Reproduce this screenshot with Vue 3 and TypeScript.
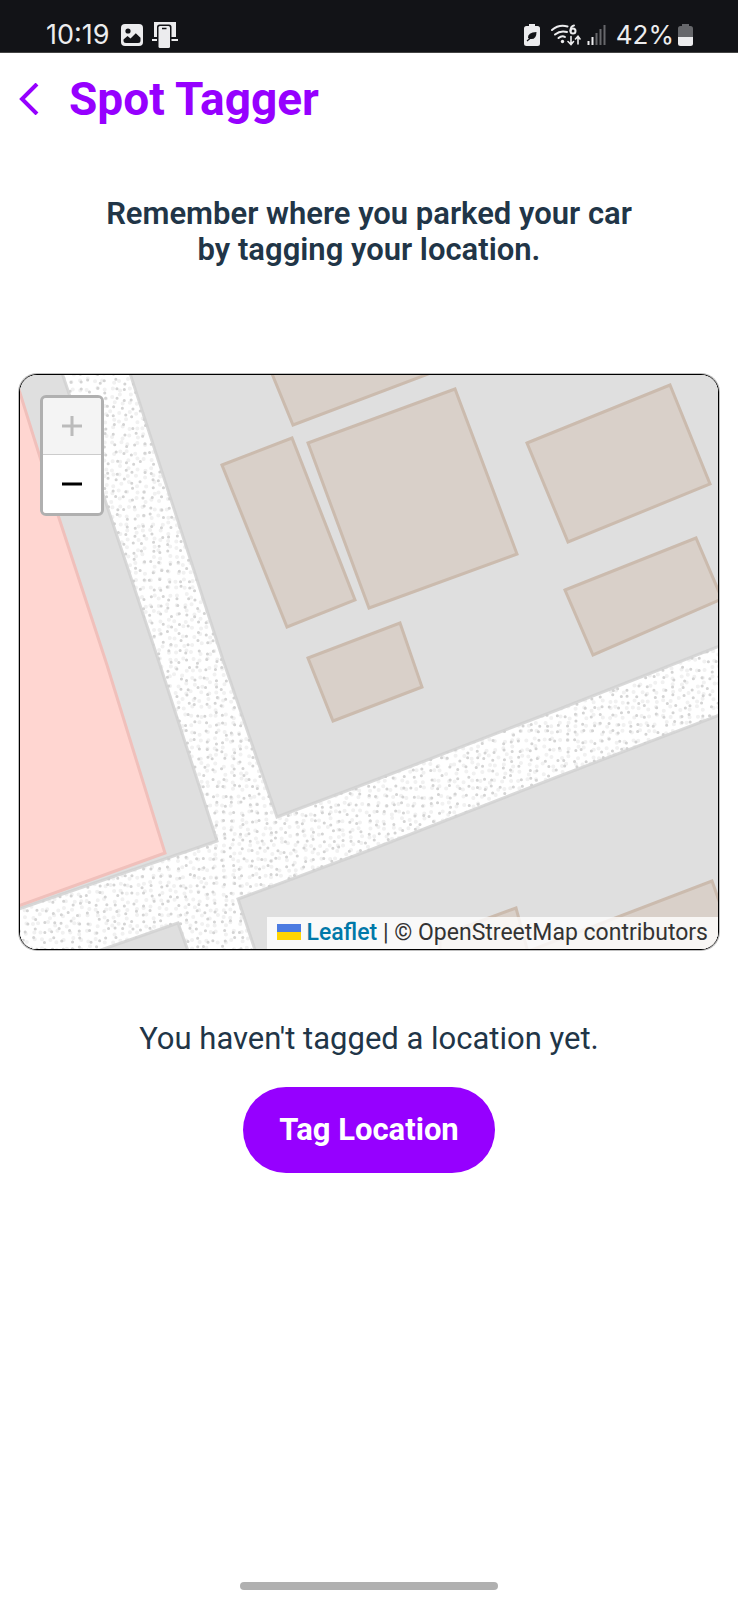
<script setup lang="ts">
import { ref } from 'vue'

interface Point {
  x: number
  y: number
}

const buildings: string[] = [
  '268,364 293,425 436,371 430,364',
  '222,465 292,438 355,600 287,627',
  '308,443 455,389 517,554 369,608',
  '308,658 400,623 422,687 333,721',
  '527,443 670,385 710,484 568,542',
  '565,590 696,538 722,599 593,655',
  '440,936 516,908 530,960 440,960',
  '500,962 712,881 740,960',
]

const road =
  'M59 364 L105 500 L160 665 L217 841 L10 912 V982 L95 952 L178 923 L192 962 H259 L238 899 L370 850 L557 777 L730 711 V642 L557 710 L370 782 L277 817 L223 660 L127 364 Z'

// Deterministic jittered grid of gravel specks for the pedestrian surface.
function gravel(step: number, seed: number): string {
  let state = seed
  const next = (): number => {
    state = (state * 1664525 + 1013904223) % 4294967296
    return state / 4294967296
  }
  const specks: Point[] = []
  for (let y = 370; y < 956; y += step) {
    for (let x = 14; x < 726; x += step) {
      specks.push({ x: x + next() * step * 0.6, y: y + next() * step * 0.6 })
    }
  }
  return specks.map((p) => `M${p.x.toFixed(1)} ${p.y.toFixed(1)}h.1`).join('')
}

const darkSpecks = gravel(9, 7)
const lightSpecks = gravel(8, 91)

const tagged = ref(false)
</script>

<template>
  <div class="screen">
    <div class="status">
      <div class="status-group">
        <span class="clock">10:19</span>
        <svg class="icon-photo" viewBox="0 0 22 22" aria-hidden="true">
          <rect x="0" y="0" width="22" height="22" rx="4" fill="#ececee" />
          <circle cx="7" cy="7" r="2.6" fill="#121317" />
          <path d="M2.5 15.5 6.5 12 9.5 14.5 14.8 9.3 19.5 13.8V16.5Q19.5 19 17 19H5Q2.5 19 2.5 16.5Z" fill="#121317" />
        </svg>
        <svg class="icon-link" viewBox="0 0 28 26" aria-hidden="true">
          <path d="M3 0H25V15H3Z" fill="#ececee" />
          <path d="M1 17H27V19H1Z" fill="#ececee" />
          <path d="M6 26V5Q6 2.500 8.500 2.500H18Q20.500 2.500 20.500 5V26Z" fill="#121317" />
          <rect x="7.500" y="4" width="11.500" height="22" rx="1.500" fill="#ececee" />
          <path d="M11 6.500H15.500" stroke="#121317" stroke-width="1.500" />
        </svg>
      </div>
      <div class="status-group">
        <svg class="icon-saver" viewBox="0 0 16 22" aria-hidden="true">
          <path d="M5 0H11V2H13.500Q16 2 16 4.500V19.500Q16 22 13.500 22H2.500Q0 22 0 19.500V4.500Q0 2 2.500 2H5Z" fill="#ececee" />
          <path d="M4 14Q3.500 8.500 12.500 8Q12.500 16 6 15Z" fill="#121317" />
          <path d="M3 17 9.500 11.500" fill="none" stroke="#121317" stroke-width="1.200" />
        </svg>
        <svg class="icon-wifi" viewBox="0 0 30 22" aria-hidden="true">
          <g fill="none" stroke="#ececee" stroke-width="2" stroke-linecap="round">
            <path d="M1 6Q8 0 16.500 2.500" />
            <path d="M4 10.500Q9.500 6 16 8" />
            <path d="M7.500 14Q11 11 14 13" />
            <path d="M23 1.500Q19.500 2 19.500 7" />
            <circle cx="22" cy="7" r="2.500" />
            <path d="M20 12.500V20M17 17.500 20 20.500 22.500 17.500M27 20V12.500M24.500 15 27 12.200 29 15" stroke-width="1.600" />
          </g>
          <circle cx="11.500" cy="17.500" r="1.700" fill="#ececee" />
        </svg>
        <svg class="icon-signal" viewBox="0 0 20 20" aria-hidden="true">
          <path d="M1.500 20V16M5.500 20V12" stroke="#ececee" stroke-width="2" />
          <path d="M9.500 20V8M13.500 20V4M17.500 20V0" stroke="#66676b" stroke-width="2" />
        </svg>
        <span class="percent">42%</span>
        <svg class="icon-battery" viewBox="0 0 15 22" aria-hidden="true">
          <path d="M4 0H11V2H12.500Q15 2 15 4.500V13H0V4.500Q0 2 2.500 2H4Z" fill="#66676b" />
          <path d="M0 13H15V19.500Q15 22 12.500 22H2.500Q0 22 0 19.500Z" fill="#ececee" />
        </svg>
      </div>
    </div>

    <header class="header">
      <button class="back" type="button" aria-label="Back">
        <svg viewBox="0 0 20 32" aria-hidden="true">
          <path d="M18 1 3 16 18 31" fill="none" stroke="#9600ff" stroke-width="4" />
        </svg>
      </button>
      <h1>Spot Tagger</h1>
    </header>

    <main class="content">
      <p class="intro">Remember where you parked your car<br />by tagging your location.</p>

      <section class="map" aria-label="Map">
        <svg class="tiles" viewBox="20 375 698 574" preserveAspectRatio="xMidYMid slice" aria-hidden="true">
          <defs>
            <clipPath id="road-area"><path :d="road" /></clipPath>
          </defs>
          <rect x="0" y="355" width="740" height="620" fill="#dfdfdf" />
          <path :d="road" fill="#fff" />
          <g clip-path="url(#road-area)" fill="none" stroke-linecap="round">
            <path :d="lightSpecks" stroke="#f1f1f1" stroke-width="4" />
            <path :d="darkSpecks" stroke="#d4d4d4" stroke-width="3" />
          </g>
          <path :d="road" fill="none" stroke="#cfcfcf" stroke-opacity="0.8" stroke-width="3" />
          <path d="M10 362 20 393 58 515 107 665 165 853 10 909Z" fill="#ffd6d1" stroke="#f0c0bb" stroke-width="3" />
          <polygon
            v-for="shape in buildings"
            :key="shape"
            :points="shape"
            fill="#d9d0c9"
            stroke="#cbbbae"
            stroke-width="3"
          />
        </svg>

        <div class="zoom">
          <button type="button" aria-label="Zoom in" disabled>
            <svg viewBox="0 0 20 20" aria-hidden="true">
              <path d="M0 10H20M10 0V20" stroke="#bbb" stroke-width="3" />
            </svg>
          </button>
          <button type="button" aria-label="Zoom out">
            <svg viewBox="0 0 20 20" aria-hidden="true">
              <path d="M0 10H20" stroke="#000" stroke-width="3" />
            </svg>
          </button>
        </div>

        <div class="attribution">
          <a href="#leaflet">
            <svg viewBox="0 0 24 16" aria-hidden="true">
              <path d="M0 0H24V8H0Z" fill="#4c7be1" />
              <path d="M0 8H24V16H0Z" fill="#ffd500" />
            </svg>
            Leaflet</a>
          | © OpenStreetMap contributors
        </div>
      </section>

      <p class="message">{{ tagged ? 'Location tagged.' : "You haven't tagged a location yet." }}</p>
      <button class="tag" type="button" @click="tagged = true">Tag Location</button>
    </main>

    <div class="home-bar"></div>
  </div>
</template>

<style>
body {
  margin: 0;
  background: #fff;
}
</style>

<style scoped>
.screen {
  display: flex;
  flex-direction: column;
  min-height: 100vh;
  box-sizing: border-box;
  padding-bottom: 10px;
  background: #fff;
  color: #213547;
  font-family: Roboto, 'Liberation Sans', sans-serif;
}

svg {
  display: block;
}

.status {
  display: flex;
  justify-content: space-between;
  align-items: flex-end;
  height: 53px;
  box-sizing: border-box;
  padding: 0 45px 3px 46px;
  background: #121317;
  border-bottom: 1px solid #444;
  color: #ececee;
  font-family: Inter, Roboto, sans-serif;
  font-size: 27px;
  line-height: 28px;
}

.status-group {
  display: flex;
  align-items: center;
}

.clock {
  margin-right: 11px;
}

.icon-photo {
  width: 22px;
  height: 22px;
  margin-right: 8px;
}

.icon-link {
  width: 28px;
  height: 26px;
}

.icon-saver {
  width: 16px;
  height: 22px;
  margin-right: 11px;
}

.icon-wifi {
  width: 30px;
  height: 22px;
  margin-right: 6px;
}

.icon-signal {
  width: 20px;
  height: 20px;
  margin-right: 9px;
}

.percent {
  margin-right: 4px;
  font-size: 26px;
}

.icon-battery {
  width: 15px;
  height: 22px;
}

.header {
  display: flex;
  align-items: center;
  gap: 30px;
  padding: 18px 19px 0;
}

.back {
  padding: 0;
  border: 0;
  background: none;
}

.back svg {
  width: 20px;
  height: 32px;
}

h1 {
  margin: 0;
  color: #9600ff;
  font-size: 46px;
  font-weight: 700;
  line-height: 56px;
}

.content {
  display: flex;
  flex: 1;
  flex-direction: column;
  align-items: center;
  padding: 69px 19px 0;
}

.intro,
.message {
  margin: 0;
  font-size: 31px;
  line-height: 36px;
  text-align: center;
}

.intro {
  font-weight: 600;
}

.map {
  position: relative;
  width: 100%;
  box-sizing: border-box;
  margin: 106px 0 71px;
  overflow: hidden;
  border: 1px solid #000;
  border-radius: 18px;
  box-shadow: 0 0 0 1px rgba(0, 0, 0, 0.25);
}

.tiles {
  width: 100%;
}

.zoom {
  position: absolute;
  top: 20px;
  left: 20px;
  display: flex;
  flex-direction: column;
  overflow: hidden;
  border: 3px solid #b0b0b0;
  border-radius: 6px;
}

.zoom button {
  display: grid;
  place-items: center;
  width: 58px;
  height: 58px;
  padding: 0;
  border: 0;
  background: #fff;
}

.zoom button:disabled {
  height: 57px;
  border-bottom: 1px solid #ccc;
  background: #f4f4f4;
}

.zoom svg {
  width: 20px;
  height: 20px;
}

.attribution {
  position: absolute;
  right: 0;
  bottom: 0;
  padding: 0 10px;
  background: rgba(255, 255, 255, 0.8);
  color: #333;
  font-size: 23px;
  line-height: 32px;
  white-space: nowrap;
}

.attribution a {
  color: #0078a8;
  font-weight: 500;
  text-decoration: none;
}

.attribution svg {
  display: inline-block;
  width: 24px;
  height: 16px;
}

.tag {
  margin-top: 30px;
  padding: 0 36px;
  border: 0;
  border-radius: 43px;
  background: #9600ff;
  color: #fff;
  font-family: inherit;
  font-size: 31px;
  font-weight: 700;
  line-height: 86px;
}

.home-bar {
  align-self: center;
  width: 35%;
  height: 8px;
  border-radius: 4px;
  background: #b0b0b0;
}
</style>
